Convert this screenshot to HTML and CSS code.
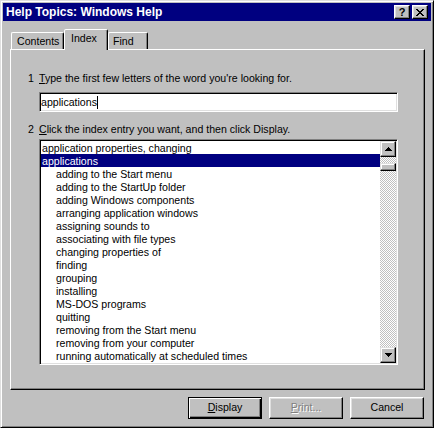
FILE: index.html
```html
<!DOCTYPE html>
<html>
<head>
<meta charset="utf-8">
<title>Help Topics: Windows Help</title>
<link rel="stylesheet" href="styles.css">
</head>
<body>
<div class="window">
  <div class="titlebar">
    <span class="title">Help Topics: Windows Help</span>
    <div class="tbtns">
      <span class="tbtn help">?</span>
      <span class="tbtn close">
        <svg width="8" height="7" viewBox="0 0 8 7" shape-rendering="crispEdges">
          <path fill="#000" d="M0 0h2v1H0zM6 0h2v1H6zM1 1h2v1H1zM5 1h2v1H5zM2 2h4v1H2zM3 3h2v1H3zM2 4h4v1H2zM1 5h2v1H1zM5 5h2v1H5zM0 6h2v1H0zM6 6h2v1H6z"/>
        </svg>
      </span>
    </div>
  </div>
  <div class="dlg">
    <div class="tabs">
      <div class="tab t1">Contents</div>
      <div class="tab t2 active">Index</div>
      <div class="tab t3">Find</div>
    </div>
    <div class="panel">
      <div class="step"><span class="num">1</span><span><u>T</u>ype the first few letters of the word you're looking for.</span></div>
      <div class="textbox">applications<span class="caret"></span></div>
      <div class="step step2"><span class="num">2</span><span><u>C</u>lick the index entry you want, and then click Display.</span></div>
      <div class="listbox">
        <ul class="items">
          <li>application properties, changing</li>
          <li class="sel">applications</li>
          <li class="sub">adding to the Start menu</li>
          <li class="sub">adding to the StartUp folder</li>
          <li class="sub">adding Windows components</li>
          <li class="sub">arranging application windows</li>
          <li class="sub">assigning sounds to</li>
          <li class="sub">associating with file types</li>
          <li class="sub">changing properties of</li>
          <li class="sub">finding</li>
          <li class="sub">grouping</li>
          <li class="sub">installing</li>
          <li class="sub">MS-DOS programs</li>
          <li class="sub">quitting</li>
          <li class="sub">removing from the Start menu</li>
          <li class="sub">removing from your computer</li>
          <li class="sub">running automatically at scheduled times</li>
        </ul>
        <div class="scrollbar">
          <div class="sbtn">
            <svg width="7" height="4" viewBox="0 0 7 4" shape-rendering="crispEdges"><path fill="#000" d="M3 0h1v1h1v1h1v1h1v1H0V3h1V2h1V1h1z"/></svg>
          </div>
          <div class="track"><div class="thumb"></div></div>
          <div class="sbtn">
            <svg width="7" height="4" viewBox="0 0 7 4" shape-rendering="crispEdges"><path fill="#000" d="M0 0h7v1H6v1H5v1H4v1H3V3H2V2H1V1H0z"/></svg>
          </div>
        </div>
      </div>
    </div>
    <div class="buttons">
      <div class="btn default"><u>D</u>isplay</div>
      <div class="btn disabled"><u>P</u>rint...</div>
      <div class="btn">Cancel</div>
    </div>
  </div>
</div>
</body>
</html>
```

FILE: styles.css
```css
* { box-sizing: border-box; }

body {
  margin: 0;
  background: #c0c0c0;
  font-family: "Liberation Sans", Arial, sans-serif;
  font-size: 10.6px;
  color: #000;
}

.window {
  width: 434px;
  height: 428px;
  background: #c0c0c0;
  border: 1px solid;
  border-color: #dfdfdf #000 #000 #dfdfdf;
  box-shadow: inset 1px 1px #fff, inset -1px -1px #808080;
  padding: 2px;
  display: flex;
  flex-direction: column;
}

.titlebar {
  height: 18px;
  background: #000080;
  display: flex;
  align-items: center;
  justify-content: space-between;
  padding: 0 3px 0 3px;
}

.title {
  color: #fff;
  font-weight: bold;
  font-size: 12px;
  line-height: 18px;
  white-space: nowrap;
}

.tbtns {
  display: flex;
  gap: 2px;
}

.tbtn {
  width: 16px;
  height: 14px;
  background: #c0c0c0;
  border: 1px solid;
  border-color: #fff #000 #000 #fff;
  box-shadow: inset -1px -1px #808080, inset 1px 1px #dfdfdf;
  display: flex;
  align-items: center;
  justify-content: center;
}

.help {
  font-weight: bold;
  font-size: 11px;
  line-height: 12px;
}

.dlg {
  padding: 8px 6px 0 7px;
}

.tabs {
  display: flex;
  align-items: flex-end;
  height: 20px;
  padding-left: 1px;
  position: relative;
  z-index: 1;
}

.tab {
  height: 17px;
  border: 1px solid;
  border-bottom: none;
  border-color: #fff #000 transparent #fff;
  border-radius: 2px 2px 0 0;
  box-shadow: inset -1px 0 #808080;
  line-height: 13px;
  padding-top: 2px;
  white-space: nowrap;
}

.tab.active {
  height: 21px;
  margin-bottom: -1px;
  background: #c0c0c0;
}

.t1 { width: 53px; padding-left: 5px; }
.t2 { width: 44px; padding-left: 6px; }
.t3 { width: 40px; padding-left: 4px; }

.panel {
  height: 341px;
  border: 1px solid;
  border-color: #fff #000 #000 #fff;
  box-shadow: inset -1px -1px #808080;
  padding: 21px 0 0 16px;
}

.step {
  display: flex;
  height: 13px;
  line-height: 13px;
  padding-top: 1px;
  white-space: nowrap;
}

.step2 { margin-top: 10px; }

.num { width: 12px; padding-left: 1px; }

.textbox {
  margin: 8px 0 0 12px;
  width: 359px;
  height: 20px;
  background: #fff;
  border: 1px solid;
  border-color: #808080 #fff #fff #808080;
  box-shadow: inset 1px 1px #000, inset -1px -1px #dfdfdf;
  padding: 0 1px;
  line-height: 18px;
}

.caret {
  display: inline-block;
  width: 1px;
  height: 13px;
  background: #000;
  vertical-align: -3px;
}

.listbox {
  margin: 4px 0 0 12px;
  width: 359px;
  height: 226px;
  display: flex;
  background: #fff;
  border: 1px solid;
  border-color: #808080 #fff #fff #808080;
  box-shadow: inset 1px 1px #000, inset -1px -1px #dfdfdf;
  padding: 1px;
}

.items {
  list-style: none;
  margin: 0;
  padding: 0;
  flex: 1;
  overflow: hidden;
}

.items li {
  height: 13px;
  line-height: 13px;
  padding-top: 1px;
  padding-left: 1px;
  white-space: nowrap;
}

.items li.sub { padding-left: 15px; }

.items li.sel {
  background: #000080;
  color: #fff;
}

.scrollbar {
  width: 16px;
  display: flex;
  flex-direction: column;
}

.sbtn, .thumb {
  background: #c0c0c0;
  border: 1px solid;
  border-color: #dfdfdf #000 #000 #dfdfdf;
  box-shadow: inset -1px -1px #808080, inset 1px 1px #fff;
}

.sbtn {
  width: 16px;
  height: 16px;
  display: flex;
  align-items: center;
  justify-content: center;
}

.track {
  flex: 1;
  background-image: repeating-conic-gradient(#c0c0c0 0 25%, #fff 0 50%);
  background-size: 2px 2px;
}

.thumb {
  margin-top: 6px;
  height: 8px;
}

.buttons {
  display: flex;
  justify-content: flex-end;
  gap: 7px;
  margin-top: 7px;
  padding-right: 1px;
}

.btn {
  width: 74px;
  height: 22px;
  text-align: center;
  line-height: 16px;
  padding-top: 1px;
  border: 1px solid;
  border-color: #fff #000 #000 #fff;
  box-shadow: inset -1px -1px #808080, inset 1px 1px #dfdfdf;
}

.btn.default {
  border-color: #000;
  box-shadow: inset 1px 1px #fff, inset -1px -1px #000, inset -2px -2px #808080;
}

.btn.disabled {
  color: #808080;
  text-shadow: 1px 1px #fff;
}
```
